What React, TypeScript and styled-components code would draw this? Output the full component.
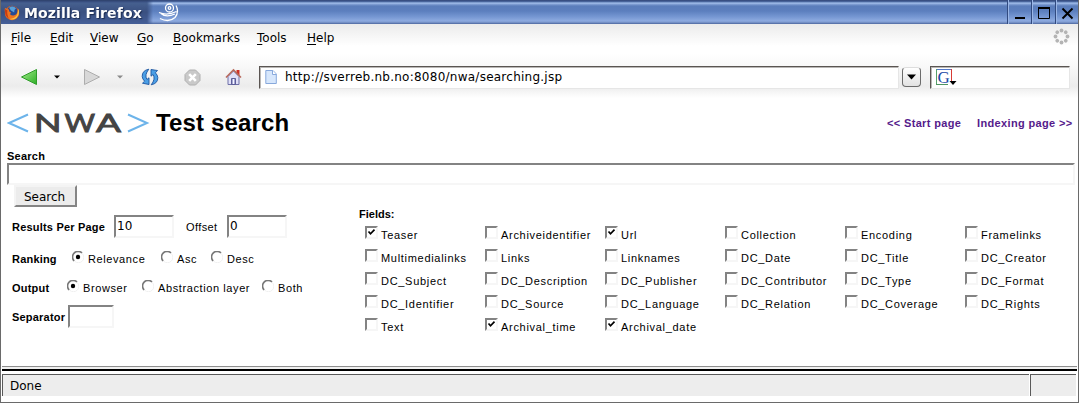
import React from 'react';
import styled, { createGlobalStyle, css } from 'styled-components';

const Global = createGlobalStyle`
  * { box-sizing: border-box; }
  body { margin: 0; background: #fff; color: #000; }
`;

const ui = css`font-family: "DejaVu Sans", sans-serif; font-size: 12px;`;
const label = css`font-family: "Liberation Sans", Arial, sans-serif; font-size: 11px;`;

const Win = styled.div`
  width: 1079px;
  height: 403px;
  display: flex;
  flex-direction: column;
  overflow: hidden;
  background: #fff;
  border: solid #6a6a6a;
  border-width: 0 1px 1px 1px;
`;

const TitleBar = styled.header`
  height: 24px;
  flex: none;
  display: flex;
  margin: 0 -1px;
  background: linear-gradient(#33497c 0, #3d5488 1px, #5474ad 2px, #a9c4ee 3px, #86a4d8 4px, #5b7dbb 6px, #5c7fbe 11px, #7798d3 17px, #8eabe0 21px, #6c87bd 23px, #46609a 24px);
`;

const TitleTab = styled.div`
  width: 153px;
  display: flex;
  align-items: center;
  padding: 2px 0 0 4px;
  gap: 4px;
  background: linear-gradient(#2d4069 0, #3b5285 2px, #46608f 3px, #3a5080 12px, #455f98 24px);
  -webkit-mask-image: linear-gradient(90deg, #000 147px, transparent 153px);
  mask-image: linear-gradient(90deg, #000 147px, transparent 153px);
`;

const TitleText = styled.span`
  font: bold 14px/18px "DejaVu Sans", sans-serif;
  letter-spacing: 0.13px;
  color: #fff;
  text-shadow: 1px 1px 1px #1c2c50;
  white-space: nowrap;
`;

const Swirl = styled.svg`
  margin: 1px auto 0 4px;
`;

const WinButton = styled.div`
  width: 24px;
  border-left: 1px solid #314a80;
  box-shadow: inset 1px 0 #9ab6e6;
  display: flex;
  justify-content: center;
  align-items: center;
  padding-top: 2px;
`;

const MenuBar = styled.nav`
  ${ui}
  height: 29px;
  flex: none;
  display: flex;
  padding: 6px 8px 0 10px;
  background: linear-gradient(#ebebeb, #fff 22px);
`;

const MenuItem = styled.span<{ $w: number }>`
  width: ${p => p.$w}px;
  line-height: 16px;
  white-space: nowrap;
  u { text-underline-offset: 2px; }
`;

const Throbber = styled.svg`
  margin: -2px 0 0 auto;
`;

const ToolBar = styled.div`
  height: 45px;
  flex: none;
  display: flex;
  align-items: center;
  padding: 3px 7px 0 19px;
  background: linear-gradient(#fff, #f8f8f8 14px, #ececec 33px, #f2f2f2 37px, #fff 45px);
`;

const Tool = styled.svg<{ $gap: number }>`
  flex: none;
  margin-right: ${p => p.$gap}px;
`;

const Field = styled.div<{ $w: number }>`
  ${ui}
  width: ${p => p.$w}px;
  height: 23px;
  flex: none;
  display: flex;
  align-items: center;
  background: #fff;
  border: 1px solid #e6e6e6;
  border-top: 1px solid #5a5552;
  border-left: 1px solid #5a5552;
  box-shadow: inset 1px 1px #b9b7b5;
  padding-left: 5px;
  gap: 8px;
  letter-spacing: 0.25px;
  white-space: nowrap;
`;

const DropButton = styled.div`
  width: 19px;
  height: 20px;
  margin: 0 9px 0 3px;
  border: 1px solid #6b6b6b;
  border-top-color: #ddd;
  border-radius: 4px;
  background: linear-gradient(#fff, #e2e2e2);
  display: flex;
  align-items: center;
  justify-content: center;
`;

const Page = styled.main`
  ${label}
  height: 268px;
  flex: none;
  padding-left: 6px;
`;

const Heading = styled.div`
  display: flex;
  align-items: center;
  height: 50px;
`;

const Title = styled.h1`
  margin: 0 auto 0 6px;
  font: bold 24px/28px "Liberation Sans", Arial, sans-serif;
  letter-spacing: 0.15px;
`;

const NavLink = styled.a<{ $w: number }>`
  width: ${p => p.$w}px;
  font-weight: bold;
  letter-spacing: 0.35px;
  color: #551a8b;
  white-space: nowrap;
`;

const SearchLabel = styled.label`
  display: block;
  height: 15px;
  line-height: 16px;
  font-weight: bold;
  letter-spacing: 0.25px;
`;

const sunken = css`
  border: 2px solid #f6f6f6;
  border-top-color: #838383;
  border-left-color: #838383;
  background: #fff;
`;

const SearchInput = styled.div`
  ${sunken}
  width: 1068px;
  height: 22px;
`;

const SearchButton = styled.button`
  ${ui}
  display: block;
  margin: 0 0 0 7px;
  padding: 2px 2px 0 0;
  width: 63px;
  height: 22px;
  line-height: 16px;
  color: #000;
  background: #ececec;
  border: 2px solid #f4f4f4;
  border-right-color: #858585;
  border-bottom-color: #858585;
  border-radius: 0;
`;

const Columns = styled.div`
  display: flex;
  align-items: flex-start;
`;

const Options = styled.section`
  flex: none;
  width: 352px;
  padding: 8px 0 0 5px;
`;

const Row = styled.div<{ $h: number }>`
  display: flex;
  align-items: center;
  height: ${p => p.$h}px;
  white-space: nowrap;
`;

const RowLabel = styled.span<{ $w: number; $plain?: boolean }>`
  width: ${p => p.$w}px;
  flex: none;
  font-weight: ${p => (p.$plain ? 'normal' : 'bold')};
  letter-spacing: ${p => (p.$plain ? 0.4 : 0.2)}px;
`;

const SmallInput = styled.div<{ $w: number; $gap?: number }>`
  ${sunken}
  ${ui}
  width: ${p => p.$w}px;
  height: 23px;
  margin: 0 ${p => p.$gap ?? 0}px 2px 0;
  line-height: 19px;
  padding-left: 1px;
`;

const Choice = styled.span<{ $w: number }>`
  display: flex;
  width: ${p => p.$w}px;
  letter-spacing: 0.6px;
  gap: 4px;
  svg { flex: none; margin-top: -2px; }
`;

const Fields = styled.section`
  flex: none;
  padding-top: 1px;
`;

const FieldsTitle = styled.div`
  font-weight: bold;
  line-height: 12px;
  height: 18px;
`;

const Grid = styled.div`
  display: grid;
  grid-template-columns: repeat(6, 120px);
  grid-auto-rows: 23px;
  padding-left: 6px;
`;

const Check = styled.label`
  display: flex;
  gap: 3px;
  line-height: 17px;
  letter-spacing: 0.7px;
  padding-top: 1px;
  white-space: nowrap;
`;

const Box = styled.span`
  ${sunken}
  width: 13px;
  height: 13px;
  margin-top: -1px;
  flex: none;
  svg { display: block; }
`;

const Splitter = styled.div`
  height: 5px;
  flex: none;
  margin: 0 1px 3px;
  border-top: 1px solid #8d8d8d;
  border-bottom: 2px solid #000;
  background: #f0f0f0;
`;

const StatusBar = styled.footer`
  ${ui}
  display: flex;
  height: 22px;
  flex: none;
  padding: 0 2px 0 1px;
`;

const StatusCell = styled.div<{ $w?: number }>`
  ${p => (p.$w ? `width: ${p.$w}px;` : 'flex: 1; margin-right: 1px;')}
  border: solid #595959;
  border-width: 1px 0 0 1px;
  background: #ededed;
  padding-left: 7px;
  line-height: 22px;
`;

const menus: [string, number][] = [['File', 39], ['Edit', 40], ['View', 47], ['Go', 36], ['Bookmarks', 84], ['Tools', 50], ['Help', 40]];

const fields = [
  'Teaser', 'Archiveidentifier', 'Url', 'Collection', 'Encoding', 'Framelinks',
  'Multimedialinks', 'Links', 'Linknames', 'DC_Date', 'DC_Title', 'DC_Creator',
  'DC_Subject', 'DC_Description', 'DC_Publisher', 'DC_Contributor', 'DC_Type', 'DC_Format',
  'DC_Identifier', 'DC_Source', 'DC_Language', 'DC_Relation', 'DC_Coverage', 'DC_Rights',
  'Text', 'Archival_time', 'Archival_date',
];
const checked = new Set(['Teaser', 'Url', 'Archival_time', 'Archival_date']);

const Radio = ({ text, w, on }: { text: string; w: number; on?: boolean }) => (
  <Choice $w={w}>
    <svg width="12" height="12" viewBox="0 0 12 12">
      <path d="M2.2 10A5.2 5.2 0 0 1 10 2" fill="none" stroke="#777" strokeWidth="1.6" />
      <path d="M10.2 2.4A5.2 5.2 0 0 1 2.6 10.2" fill="none" stroke="#f0f0f0" />
      {on && <circle cx="6" cy="6" r="2.2" />}
    </svg>
    {text}
  </Choice>
);

const Firefox = () => (
  <svg width="16" height="16" viewBox="0 0 16 16">
    <circle cx="8" cy="8" r="7.2" fill="#e8641b" />
    <circle cx="8.3" cy="6.2" r="5.2" fill="#254a94" />
    <path d="M5 2.8Q9 .2 12 3.2L10.5 5 10.2 7.5 7 5.5Z" fill="#58a0d8" />
    <path d="M1 3Q0 8 2.5 12 7 17 12.5 13 16.5 9 14 3.5 14.4 8 11.6 9.8 8.5 11.5 6 9.2L7 7.6 5 6.2 5.2 4.6 3.6 4.2Z" fill="#ef7420" />
    <path d="M14 3.5Q16.5 9 12.5 13 9 15.5 5.5 14 11 13.5 13 10 14.3 7 14 3.5Z" fill="#f8c243" />
    <path d="M1 4Q.5 9 3 12L5 14Q2.5 9 3.5 5.5Z" fill="#c63b14" />
  </svg>
);

const Caret = ({ color, gap }: { color: string; gap: number }) => (
  <Tool $gap={gap} width="6" height="4" viewBox="0 0 6 4"><path d="M0 .5H6L3 3.5Z" fill={color} /></Tool>
);

export default function App() {
  return (
    <Win>
      <Global />
      <TitleBar>
        <TitleTab><Firefox /><TitleText>Mozilla Firefox</TitleText></TitleTab>
        <Swirl width="22" height="22" viewBox="0 0 22 22" fill="none" stroke="#fff" strokeWidth="1.3">
          <circle cx="12.5" cy="7" r="4" />
          <circle cx="12.5" cy="7" r="1.3" />
          <path d="M2 11.5Q10 15 19.5 10.5M4 12.5Q9 17 18 13M19 4.5Q22.5 11 18 16.5 12 22 3 17.5" />
        </Swirl>
        <WinButton><svg width="12" height="14"><path d="M1 12H11" stroke="#000" strokeWidth="2" /></svg></WinButton>
        <WinButton><svg width="14" height="14"><path d="M1.5 2V12.5H12.5V2" fill="none" stroke="#000" /><path d="M1 2H13" stroke="#000" strokeWidth="2" /></svg></WinButton>
        <WinButton><svg width="13" height="13"><path d="M1.5 1.5 11.5 11.5M11.5 1.5 1.5 11.5" stroke="#000" strokeWidth="1.9" /></svg></WinButton>
      </TitleBar>
      <MenuBar>
        {menus.map(([t, w]) => <MenuItem key={t} $w={w}><u>{t[0]}</u>{t.slice(1)}</MenuItem>)}
        <Throbber width="17" height="17" viewBox="-8.5 -8.5 17 17">
          {[0, 45, 90, 135, 180, 225, 270, 315].map(a => (
            <circle key={a} cy="-6" r="1.9" fill="#b4b4b4" transform={`rotate(${a})`} />
          ))}
        </Throbber>
      </MenuBar>
      <ToolBar>
        <Tool $gap={16} width="18" height="18" viewBox="0 0 18 18">
          <defs><linearGradient id="g" x2="1" y2="1"><stop stopColor="#a5ec8d" /><stop offset="1" stopColor="#2cae25" /></linearGradient></defs>
          <path d="M1.5 9 16.5 1.5V16.5Z" fill="url(#g)" stroke="#2f9c2a" strokeLinejoin="round" />
        </Tool>
        <Caret color="#000" gap={23} />
        <Tool $gap={16} width="18" height="18" viewBox="0 0 18 18">
          <path d="M16.5 9 1.5 1.5V16.5Z" fill="#d8d8d8" stroke="#adadad" strokeLinejoin="round" />
        </Tool>
        <Caret color="#8a8a8a" gap={18} />
        <Tool $gap={25} width="18" height="18" viewBox="0 0 18 18" fill="#4a9fe6" stroke="#1c559f" strokeWidth=".9" strokeLinejoin="round">
          <path d="M7.8 1.2Q1 2.5 1.2 8.5 1.4 11 3.6 13.2L1.5 15.2 8 16.5V9.8L5.9 11.5Q3.2 7 7.8 1.2Z" />
          <path d="M10.2 16.8Q17 15.5 16.8 9.5 16.6 7 14.4 4.8L16.5 2.5 10 1.5V8.2L12.1 6.5Q14.8 11 10.2 16.8Z" />
        </Tool>
        <Tool $gap={24} width="17" height="17" viewBox="0 0 17 17">
          <path d="M5.5 1H11.5L16 5.5V11.5L11.5 16H5.5L1 11.5V5.5Z" fill="#c9c9c9" stroke="#b0b0b0" />
          <path d="M5.2 5.2 11.8 11.8M11.8 5.2 5.2 11.8" stroke="#fff" strokeWidth="2.6" />
        </Tool>
        <Tool $gap={17} width="17" height="18" viewBox="0 0 17 18">
          <path d="M11.5 2H14.5V7H11.5Z" fill="#cf3027" />
          <path d="M3 8.5 8.5 3 14 8.5V16.5H3Z" fill="#e0e0f8" stroke="#6f70a8" />
          <path d="M1 9.5 8.5 1.8 16 9.5" fill="none" stroke="#b8695b" strokeWidth="1.6" />
          <path d="M6.5 10.5H10.5V16.5H6.5Z" fill="#8d8fc6" stroke="#5d5e98" />
          <path d="M8.5 11V16" stroke="#f6f6ff" strokeWidth="1.5" />
        </Tool>
        <Field $w={640}>
          <svg width="12" height="14" viewBox="0 0 12 14"><path d="M.8.5H8L11.3 4V13.5H.8Z" fill="#d7e7fc" stroke="#88a9dc" /><path d="M7.5.5V4.5H11.3" fill="#fff" stroke="#88a9dc" /></svg>
          http://sverreb.nb.no:8080/nwa/searching.jsp
        </Field>
        <DropButton><svg width="9" height="6"><path d="M0 .5H9L4.5 5.5Z" /></svg></DropButton>
        <Field $w={140}>
          <svg width="22" height="18" viewBox="2 0 22 18">
            <path d="M2 1.5H17" stroke="#5277c8" /><path d="M2.5 1V17" stroke="#58a06a" /><path d="M2 16.5H14" stroke="#4f9461" /><path d="M17.5 1V13" stroke="#d83b35" />
            <text x="3.5" y="14.5" fontFamily="Liberation Serif" fontSize="17" fill="#1c49a5">G</text>
            <path d="M15.5 13H22.5L19 17Z" />
          </svg>
        </Field>
      </ToolBar>
      <Page>
        <Heading>
          <svg width="143" height="36" viewBox="0 -8 143 36">
            <path d="M21 1.5 2 10 21 18.5M121 1.5 140 10 121 18.5" fill="none" stroke="#6db4ea" strokeWidth="2" />
            <g fontFamily="Lato" fontSize="25" fill="#444" stroke="#444" strokeWidth=".9">
              <text x="27" y="18.5" textLength="27.5" lengthAdjust="spacingAndGlyphs">N</text>
              <text x="57.5" y="18.5" textLength="30.5" lengthAdjust="spacingAndGlyphs">W</text>
              <text x="89" y="18.5" textLength="25" lengthAdjust="spacingAndGlyphs">A</text>
            </g>
          </svg>
          <Title>Test search</Title>
          <NavLink $w={90}>&lt;&lt; Start page</NavLink>
          <NavLink $w={101}>Indexing page &gt;&gt;</NavLink>
        </Heading>
        <SearchLabel>Search</SearchLabel>
        <SearchInput />
        <SearchButton>Search</SearchButton>
        <Columns>
          <Options>
            <Row $h={24}>
              <RowLabel $w={102}>Results Per Page</RowLabel>
              <SmallInput $w={60} $gap={12}>10</SmallInput>
              <RowLabel $w={41} $plain>Offset</RowLabel>
              <SmallInput $w={60}>0</SmallInput>
            </Row>
            <Row $h={40}>
              <RowLabel $w={60}>Ranking</RowLabel>
              <Radio text="Relevance" w={89} on /><Radio text="Asc" w={50} /><Radio text="Desc" w={60} />
            </Row>
            <Row $h={18}>
              <RowLabel $w={55}>Output</RowLabel>
              <Radio text="Browser" w={75} on /><Radio text="Abstraction layer" w={120} /><Radio text="Both" w={50} />
            </Row>
            <Row $h={40}>
              <RowLabel $w={56}>Separator</RowLabel>
              <SmallInput $w={46} />
            </Row>
          </Options>
          <Fields>
            <FieldsTitle>Fields:</FieldsTitle>
            <Grid>
              {fields.map(f => (
                <Check key={f}>
                  <Box>{checked.has(f) && <svg width="9" height="9"><path d="M1.5 3.5 3.5 5.8 7.5 1.6" fill="none" stroke="#000" strokeWidth="1.7" /></svg>}</Box>
                  {f}
                </Check>
              ))}
            </Grid>
          </Fields>
        </Columns>
      </Page>
      <Splitter />
      <StatusBar>
        <StatusCell>Done</StatusCell>
        <StatusCell $w={46} />
      </StatusBar>
    </Win>
  );
}
